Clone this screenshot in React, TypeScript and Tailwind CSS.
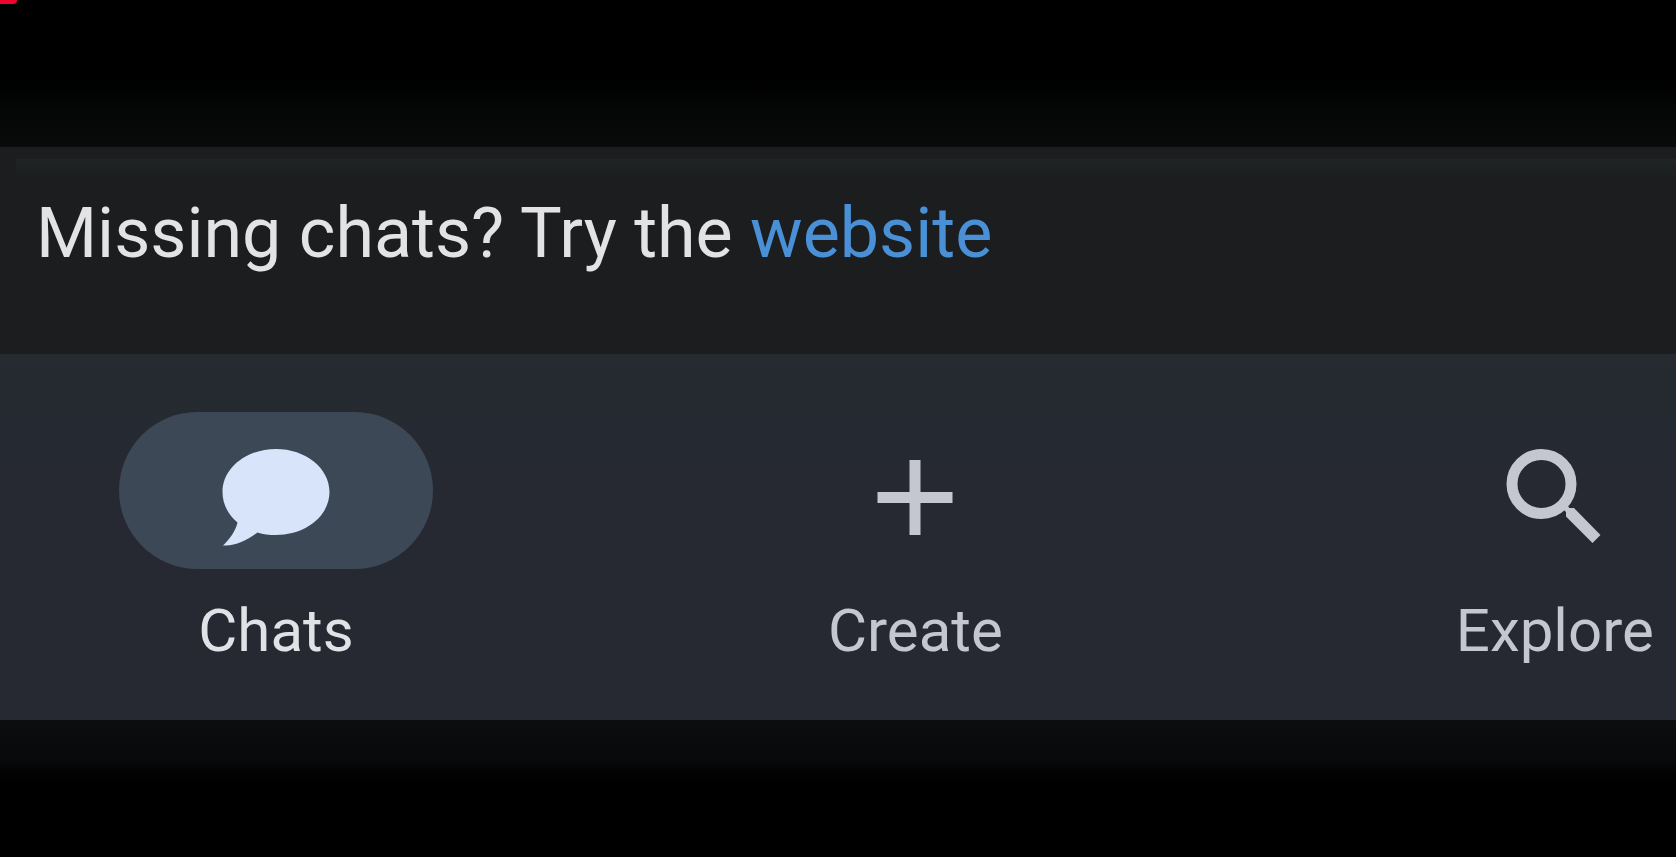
import type { ReactNode } from "react";

function ChatIcon() {
  return (
    <svg viewBox="0 1 128 128" className="size-32" fill="currentColor" aria-hidden="true">
      <path d="M64 23C93.500 23 117.500 42 117.500 66S93.500 109 64 109C57 109 51 108.500 45.500 106.500C35 114.500 23 120.500 11 119.500C18 113 23.500 105 25.500 96.500C16 88.500 10.500 78 10.500 66C10.500 42 34.500 23 64 23Z" />
    </svg>
  );
}

function PlusIcon() {
  return (
    <svg viewBox="0 1 128 128" className="size-32" fill="currentColor" aria-hidden="true">
      <path d="M58.500 34h11v32h32v11h-32v32h-11v-32h-32v-11h32z" />
    </svg>
  );
}

function SearchIcon() {
  return (
    <svg viewBox="0 1 128 128" className="size-32" fill="currentColor" aria-hidden="true">
      <circle cx="50.500" cy="58" r="29.500" fill="none" stroke="currentColor" strokeWidth="11" />
      <path d="M72 83L76 79L78.500 82H83L109.500 109L101.500 117L75 90.500V86Z" />
    </svg>
  );
}

type NavItemProps = { label: string; icon: ReactNode; active?: boolean };

function NavItem({ label, icon, active = false }: NavItemProps) {
  return (
    <button
      type="button"
      aria-current={active ? "page" : undefined}
      className="flex w-[314px] shrink-0 flex-col items-center gap-[26px]"
    >
      <span
        className={
          active
            ? "flex h-[157px] w-full items-center justify-center rounded-full bg-[#3d4857] text-[#d7e4f9]"
            : "flex h-[157px] w-full items-center justify-center text-[#c4c6d0]"
        }
      >
        {icon}
      </span>
      <span
        className={
          active
            ? "text-[60px] leading-[72px] text-[#e1e2e6]"
            : "text-[60px] leading-[72px] text-[#c4c6d0]"
        }
      >
        {label}
      </span>
    </button>
  );
}

export default function App() {
  return (
    <div className="flex min-h-screen flex-col overflow-hidden bg-black font-['Roboto',sans-serif]">
      <div className="h-[147px] bg-linear-to-b from-black from-40% via-[#050707] via-75% to-[#090a0a]">
        <div className="h-1 w-[17px] rounded-br bg-[#f0052d]" />
      </div>
      <main className="bg-[#1c1d1f] pt-3 pb-[81px]">
        <div className="ml-4 h-5 bg-linear-to-b from-[#1f2425] to-[#1c1d1f]" />
        <p className="px-9 pt-[14px] text-[70px] leading-[80px] text-[#e3e3e5]">
          Missing chats? Try the{" "}
          <a href="#website" className="text-[#4a90d6]">
            website
          </a>
        </p>
      </main>
      <nav
        aria-label="Main"
        className="flex gap-[20.9%] overflow-hidden bg-linear-to-b from-[#252b31] to-[#262932] to-30% pt-[58px] pb-[53px] pl-[7.1%]"
      >
        <NavItem label="Chats" icon={<ChatIcon />} active />
        <NavItem label="Create" icon={<PlusIcon />} />
        <NavItem label="Explore" icon={<SearchIcon />} />
      </nav>
      <div className="flex-1 bg-linear-to-b from-[#0c0d0f] via-[#08090a] via-30% to-black to-55%" />
    </div>
  );
}
